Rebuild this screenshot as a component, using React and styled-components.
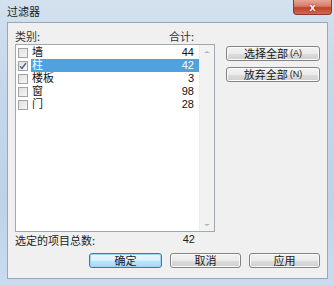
import React from 'react';
import styled, { createGlobalStyle } from 'styled-components';

const GlobalStyle = createGlobalStyle`
  html, body { margin: 0; padding: 0; }
  body {
    background: #c8d9ec;
    font-family: "Liberation Sans", "Noto Sans CJK SC", sans-serif;
    font-size: 12px;
    color: #000;
  }
`;

const rows = [
  { name: '墙', count: 44, checked: false },
  { name: '柱', count: 42, checked: true },
  { name: '楼板', count: 3, checked: false },
  { name: '窗', count: 98, checked: false },
  { name: '门', count: 28, checked: false },
];

const Window = styled.div`
  width: 334px;
  height: 285px;
  display: flex;
  flex-direction: column;
  box-sizing: border-box;
  background: linear-gradient(180deg, #d3e1ef 0%, #c6d7ea 30%, #bed2e8 70%, #c9dbee 100%);
`;

const TitleBar = styled.div`
  height: 22px;
  display: flex;
  justify-content: space-between;
  align-items: flex-start;
  flex-shrink: 0;
`;

const Title = styled.span`
  padding: 4px 0 0 7px;
  font-family: "Noto Sans CJK SC", sans-serif;
  font-size: 11px;
  line-height: 14px;
  color: #1a1a1a;
`;

const CloseButton = styled.div`
  width: 39px;
  height: 15px;
  margin-right: 2px;
  box-sizing: border-box;
  border: 1px solid #8a3a30;
  border-top: none;
  border-radius: 0 0 4px 4px;
  background: linear-gradient(180deg, #e8a696 0%, #d77a66 45%, #c1412b 55%, #d5684f 100%);
  display: flex;
  align-items: center;
  justify-content: center;
  color: #fff;
  font-family: "Liberation Sans", sans-serif;
  font-size: 11px;
  font-weight: bold;
  line-height: 1;
  text-shadow: 0 0 2px #7a1a10;
`;

const Client = styled.div`
  flex: 1;
  margin: 0 6px 6px 7px;
  border: 1px solid #98a8b9;
  background: #f0f0f0;
  display: flex;
  flex-direction: column;
  padding: 6px 7px 0 7px;
`;

const Main = styled.div`
  display: flex;
  gap: 11px;
`;

const LeftCol = styled.div`
  width: 200px;
  display: flex;
  flex-direction: column;
`;

const HeaderRow = styled.div`
  display: flex;
  justify-content: space-between;
  height: 15px;
  padding-right: 21px;
  font-family: "Noto Sans CJK SC", sans-serif;
  font-size: 11px;
  line-height: 15px;
  color: #333;
`;

const ListBox = styled.div`
  height: 188px;
  box-sizing: border-box;
  border: 1px solid #a3a8b0;
  background: #fff;
  display: flex;
`;

const ListRows = styled.div`
  flex: 1;
  padding-top: 1px;
`;

const Row = styled.div`
  height: 13px;
  display: flex;
  align-items: center;
`;

const CheckBox = styled.span`
  width: 10px;
  height: 10px;
  margin: 0 3px 0 2px;
  box-sizing: border-box;
  border: 1px solid #a2a2a2;
  background: linear-gradient(135deg, #e0e0e0 0%, #f6f6f6 100%);
  display: flex;
  align-items: center;
  justify-content: center;
  flex-shrink: 0;
`;

const RowBody = styled.div`
  flex: 1;
  height: 13px;
  display: flex;
  align-items: center;
  justify-content: space-between;
  padding: 0 5px 0 1px;
  background: ${(p) => (p.$selected ? '#4fa2de' : 'transparent')};
  color: ${(p) => (p.$selected ? '#fff' : '#111')};
`;

const Name = styled.div`
  font-family: "Liberation Sans", "Noto Sans CJK SC", sans-serif;
  font-size: 11px;
  line-height: 13px;
`;

const Count = styled.div`
  font-family: "Liberation Sans", sans-serif;
  font-size: 11px;
  line-height: 13px;
`;

const ScrollBar = styled.div`
  width: 14px;
  background: #f2f2f2;
  border-left: 1px solid #ececec;
  display: flex;
  flex-direction: column;
  justify-content: space-between;
  align-items: center;
  padding: 6px 0 5px;
`;

const Arrow = styled.span`
  width: 0;
  height: 0;
  border-left: 3px solid transparent;
  border-right: 3px solid transparent;
  ${(p) =>
    p.$down
      ? 'border-top: 2px solid #b4b4b4;'
      : 'border-bottom: 2px solid #b4b4b4;'}
`;

const TotalRow = styled.div`
  display: flex;
  justify-content: space-between;
  height: 14px;
  margin-top: 1px;
  padding-right: 20px;
  line-height: 14px;
  color: #222;
`;

const TotalLabel = styled.span`
  font-family: "Noto Sans CJK SC", sans-serif;
  font-size: 11px;
`;

const RightCol = styled.div`
  width: 94px;
  display: flex;
  flex-direction: column;
  gap: 6px;
  padding-top: 17px;
`;

const Button = styled.div`
  width: ${(p) => p.$width || 94}px;
  height: 15px;
  box-sizing: border-box;
  border: 1px solid ${(p) => (p.$default ? '#3d7bad' : '#838383')};
  border-radius: 3px;
  background: ${(p) =>
    p.$default
      ? 'linear-gradient(180deg, #eaf6fd 0%, #d9f0fc 50%, #bee6fd 51%, #a7d9f5 100%)'
      : 'linear-gradient(180deg, #f3f3f3 0%, #ebebeb 50%, #dddddd 51%, #cfcfcf 100%)'};
  box-shadow: ${(p) => (p.$default ? 'inset 0 0 0 1px #9fd5f2' : 'inset 0 0 0 1px #fcfcfc')};
  display: flex;
  align-items: center;
  justify-content: center;
  font-family: "Noto Sans CJK SC", sans-serif;
  font-size: 11px;
  line-height: 13px;
  color: #1a1a1a;
`;

const Mnemonic = styled.span`
  font-family: "Liberation Sans", sans-serif;
  font-size: 9px;
  margin-left: 2px;
`;

const ButtonRow = styled.div`
  display: flex;
  justify-content: flex-end;
  gap: 8px;
  margin-top: 6px;
`;

function Check() {
  return (
    <svg width="8" height="8" viewBox="0 0 8 8">
      <path d="M1 4.2 L3 6.5 L7 1" fill="none" stroke="#4a5f8c" strokeWidth="1.3" />
    </svg>
  );
}

export default function App() {
  return (
    <>
      <GlobalStyle />
      <Window>
        <TitleBar>
          <Title>过滤器</Title>
          <CloseButton>x</CloseButton>
        </TitleBar>
        <Client>
          <Main>
            <LeftCol>
              <HeaderRow>
                <span>类别:</span>
                <span>合计:</span>
              </HeaderRow>
              <ListBox>
                <ListRows>
                  {rows.map((r) => (
                    <Row key={r.name}>
                      <CheckBox>{r.checked && <Check />}</CheckBox>
                      <RowBody $selected={r.checked}>
                        <Name>{r.name}</Name>
                        <Count>{r.count}</Count>
                      </RowBody>
                    </Row>
                  ))}
                </ListRows>
                <ScrollBar>
                  <Arrow />
                  <Arrow $down />
                </ScrollBar>
              </ListBox>
              <TotalRow>
                <TotalLabel>选定的项目总数:</TotalLabel>
                <Count>42</Count>
              </TotalRow>
            </LeftCol>
            <RightCol>
              <Button>
                选择全部<Mnemonic>(A)</Mnemonic>
              </Button>
              <Button>
                放弃全部<Mnemonic>(N)</Mnemonic>
              </Button>
            </RightCol>
          </Main>
          <ButtonRow>
            <Button $width={73} $default>确定</Button>
            <Button $width={71}>取消</Button>
            <Button $width={71}>应用</Button>
          </ButtonRow>
        </Client>
      </Window>
    </>
  );
}
